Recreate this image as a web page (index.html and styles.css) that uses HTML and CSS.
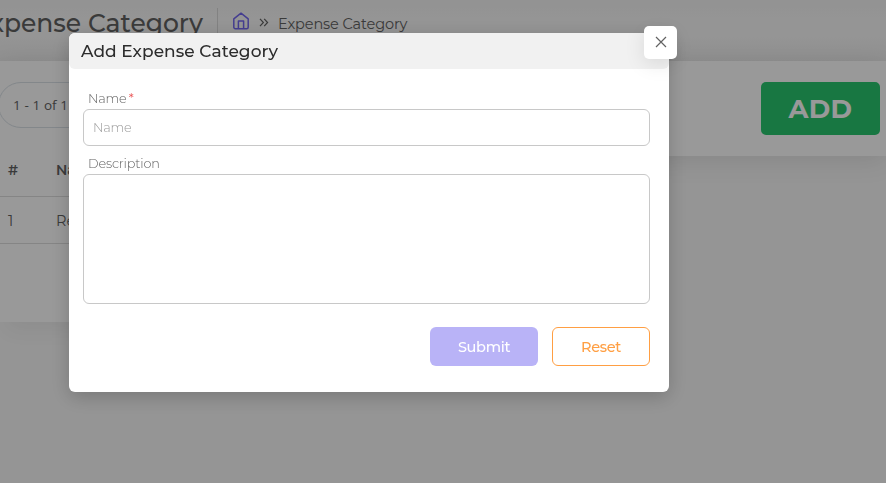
FILE: index.html
```html
<!DOCTYPE html>
<html lang="en">
<head>
<meta charset="utf-8">
<title>Expense Category</title>
<link rel="stylesheet" href="styles.css">
</head>
<body>
<div class="page">
  <header class="header">
    <h1 class="title"><span>Expense Category</span></h1>
    <nav class="crumbs">
      <svg class="home" viewBox="0 0 18 18" fill="none" stroke="#7367f0" stroke-width="1.5" stroke-linejoin="round" stroke-linecap="round"><path d="M1.8 6.8 9 1.2l7.2 5.6v8.4a1.5 1.5 0 0 1-1.5 1.5H3.3a1.5 1.5 0 0 1-1.5-1.5zM6.4 16.5V9h5.2v7.5"/></svg>
      <svg class="chevrons" viewBox="0 0 10 9" fill="none" stroke="#626262" stroke-width="1.2"><path d="m1 .8 3.4 3.7L1 8.2M5.2.8l3.4 3.7-3.4 3.7"/></svg>
      <span class="crumb">Expense Category</span>
    </nav>
  </header>
  <main>
    <section class="toolbar">
      <div class="pager">1 - 1 of 1</div>
      <button class="add"><span>ADD</span></button>
    </section>
    <section class="table-card">
      <div class="row head"><span>#</span><span>Name</span></div>
      <div class="row"><span>1</span><span>Rent</span></div>
    </section>
  </main>
</div>
<div class="overlay">
  <form class="modal">
    <button type="button" class="close" aria-label="Close"><svg viewBox="0 0 12 12" stroke="#626262" stroke-width="1.2"><path d="m1 1 10 10M11 1 1 11"/></svg></button>
    <h2 class="modal-title">Add Expense Category</h2>
    <div class="body">
      <label for="name"><span class="name-label">Name</span> <b>*</b></label>
      <input id="name" placeholder="Name">
      <label for="desc" class="desc-label">Description</label>
      <textarea id="desc"></textarea>
      <div class="actions">
        <button type="button" class="submit">Submit</button>
        <button type="button" class="reset">Reset</button>
      </div>
    </div>
  </form>
</div>
</body>
</html>
```
FILE: styles.css
```css
* { box-sizing: border-box; }
body {
  margin: 0;
  height: 483px;
  overflow: hidden;
  background: #f8f8f8;
  color: #626262;
  font-family: Montserrat, Inter, sans-serif;
}
button, input, textarea { font-family: inherit; }
.page { height: 483px; overflow: hidden; }
.header { display: flex; height: 61px; background: linear-gradient(#f5f5f5, #f8f8f8 30%, #f8f8f8 60%, #f0f0f0); }
.title {
  display: flex;
  justify-content: flex-end;
  flex: none;
  width: 203px;
  margin: 0;
  font-size: 25px;
  font-weight: 500;
  line-height: 46px;
  white-space: nowrap;
  color: #626262;
}
.crumbs { display: flex; height: 46px; margin: 8px 0 0 14px; padding-left: 15px; border-left: 1px solid #d9d9d9; }
.home { width: 18px; height: 18px; margin: 4px 0 0 -1px; }
.chevrons { width: 10px; height: 9px; margin: 10px 0 0 9px; }
.crumb { margin-left: 9px; font-size: 14.5px; line-height: 33px; font-weight: 400; letter-spacing: -0.1px; white-space: nowrap; }
.toolbar {
  display: flex;
  justify-content: space-between;
  height: 95px;
  padding: 21px 6px 0 0;
  background: #fff;
  box-shadow: 0 4px 25px rgba(0, 0, 0, .1);
}
.pager {
  width: 150px;
  height: 46px;
  margin-left: -2px;
  padding-left: 14px;
  border: 1px solid #dae1e7;
  border-radius: 23px;
  font: 500 13.5px/45px "Open Sans", sans-serif;
  letter-spacing: 0.1px;
}
.add {
  width: 119px;
  height: 53px;
  padding: 0;
  border: 0;
  border-radius: 5px;
  background: #28c76f;
  color: #fff;
  font-size: 26px;
  font-weight: 700;
  letter-spacing: 0.3px;
}
.table-card { width: 600px; height: 166px; background: #fff; position: relative; box-shadow: 0 14px 20px -6px rgba(0, 0, 0, .05); }
.row {
  display: grid;
  grid-template-columns: 48px 1fr;
  height: 47px;
  padding-left: 8px;
  border-bottom: 1px solid #dedede;
  font-size: 14.5px;
  font-weight: 400;
  line-height: 48px;
}
.head { height: 41px; font-size: 14px; line-height: 29px; font-weight: 600; }
.overlay { position: fixed; inset: 0; padding: 33px 0 0 69px; background: rgba(0, 0, 0, .4); }
.modal { position: relative; width: 600px; height: 359px; border-radius: 6px; background: #fff; box-shadow: 0 5px 20px rgba(0, 0, 0, .2); }
.modal-title {
  height: 36px;
  margin: 0;
  padding-left: 12px;
  border-radius: 6px;
  background: #f1f1f1;
  color: #2c2c2c;
  font-size: 17px;
  font-weight: 500;
  line-height: 36px;
  letter-spacing: 0.05px;
}
.close {
  position: absolute;
  top: -7px;
  right: -8px;
  display: grid;
  place-items: center;
  width: 33px;
  height: 33px;
  padding: 0 0 2px;
  border: 0;
  border-radius: 5px;
  background: #fff;
  box-shadow: 0 5px 20px rgba(0, 0, 0, .1);
}
.close svg { width: 12px; height: 12px; }
.body { display: flex; flex-direction: column; padding: 20px 19px 0 14px; }
label { height: 20px; padding-left: 5px; font-size: 12.8px; line-height: 20px; font-weight: 300; letter-spacing: -0.15px; }
label b { margin-left: -1px; color: #ea5455; font-weight: 400; }
.desc-label { margin-top: 8px; }
input, textarea { width: 567px; border: 1px solid #c8c8c8; border-radius: 6px; background: #fff; outline: 0; }
input { height: 37px; padding: 0 9px; font-size: 12.8px; }
input::placeholder { color: #999; font-weight: 300; letter-spacing: -0.2px; opacity: 1; }
textarea { height: 130px; resize: none; }
.actions { display: flex; justify-content: flex-end; gap: 14px; margin-top: 23px; }
.submit, .reset { height: 39px; padding: 0; border-radius: 6px; font-size: 14.5px; font-weight: 500; letter-spacing: -0.3px; }
.submit { width: 108px; border: 0; background: #b9b3f7; color: #fff; }
.reset { width: 98px; border: 1px solid #ff9f43; background: #fff; color: #ff9f43; }
```
